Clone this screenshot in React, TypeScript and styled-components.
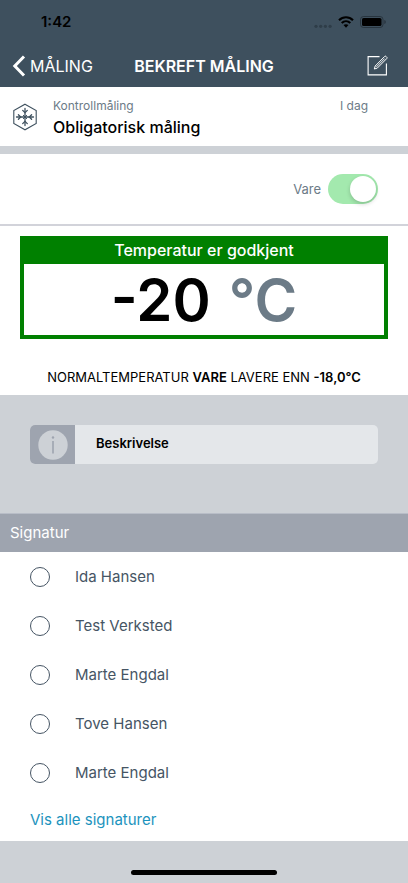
import React, { useState } from "react";
import styled, { createGlobalStyle } from "styled-components";

const colors = {
  header: "#3e505e",
  slate: "#465564",
  muted: "#6c7b87",
  page: "#cdd1d6",
  bar: "#9ea4af",
  field: "#e4e7ea",
  approved: "#008000",
  link: "#1c93bd",
};

const GlobalStyle = createGlobalStyle`
  *, *::before, *::after { box-sizing: border-box; }
  body {
    margin: 0;
    background: ${colors.page};
    font-family: Inter, "Liberation Sans", sans-serif;
    color: #000;
  }
  button { font: inherit; color: inherit; border: 0; padding: 0; background: none; cursor: pointer; }
  h1, h2, p, ul { margin: 0; padding: 0; }
`;

const Screen = styled.div`
  min-height: 100vh;
  display: flex;
  flex-direction: column;
`;

const Header = styled.header`
  background: ${colors.header};
`;

const StatusBar = styled.div`
  height: 44px;
  padding: 0 22px 0 41px;
  display: flex;
  align-items: center;
  justify-content: space-between;
`;

const Clock = styled.time`
  font-size: 15px;
  font-weight: 600;
  line-height: 20px;
`;

const StatusIcons = styled.div`
  display: flex;
  align-items: center;
  gap: 6px;
`;

const NavBar = styled.nav`
  height: 43px;
  padding: 0 12px;
  display: grid;
  grid-template-columns: 1fr auto 1fr;
  align-items: center;
  color: #fff;
`;

const BackButton = styled.button`
  justify-self: start;
  display: flex;
  align-items: center;
  gap: 4px;
  font-size: 16px;
  line-height: 20px;
`;

const NavTitle = styled.h1`
  font-size: 16px;
  font-weight: 600;
  line-height: 20px;
`;

const EditButton = styled.button`
  justify-self: end;
  display: flex;
  padding: 0 8px;
`;

const Task = styled.section`
  height: 59px;
  padding: 0 40px 0 12px;
  display: flex;
  align-items: center;
  gap: 15px;
  background: #fff;
`;

const TaskText = styled.div`
  flex: 1;
  padding-top: 2px;
`;

const TaskMeta = styled.div`
  display: flex;
  justify-content: space-between;
  font-size: 12px;
  line-height: 18px;
  color: ${colors.muted};
`;

const TaskTitle = styled.h2`
  font-size: 16px;
  font-weight: 500;
  line-height: 24px;
`;

const SwitchRow = styled.section`
  height: 80px;
  padding: 0 30px;
  display: flex;
  align-items: center;
  justify-content: flex-end;
  background: #fff;
  border-top: 8px solid ${colors.page};
  border-bottom: 2px solid #d2d3da;
`;

const SwitchLabel = styled.label`
  display: flex;
  align-items: center;
  gap: 7px;
  font-size: 13px;
  line-height: 20px;
  color: ${colors.muted};
`;

const Switch = styled.input`
  appearance: none;
  margin: 0;
  width: 50px;
  height: 30px;
  padding: 2px;
  display: flex;
  border-radius: 15px;
  background: #dcdfe2;
  cursor: pointer;

  &::before {
    content: "";
    width: 26px;
    height: 26px;
    border-radius: 50%;
    background: #fff;
    box-shadow: 0 2px 4px rgba(0, 0, 0, 0.18);
  }
  &:checked {
    justify-content: flex-end;
    background: #a3e9ae;
  }
`;

const Measurement = styled.section`
  padding: 10px 20px 8px;
  background: #fff;
`;

const ResultCard = styled.div`
  border: 4px solid ${colors.approved};
  border-top: 0;
`;

const ResultStatus = styled.p`
  background: ${colors.approved};
  color: #fff;
  text-align: center;
  font-size: 16px;
  font-weight: 500;
  line-height: 28px;
`;

const Reading = styled.p`
  padding-top: 2px;
  display: flex;
  justify-content: center;
  gap: 18px;
  font-size: 58px;
  font-weight: 600;
  line-height: 69px;
`;

const Unit = styled.span`
  color: ${colors.muted};
`;

const Norm = styled.p`
  padding-top: 28px;
  text-align: center;
  font-size: 13px;
  line-height: 20px;

  strong { font-weight: 600; }
`;

const DescriptionArea = styled.section`
  padding: 30px 30px 49px;
  border-bottom: 1px solid #b8bdc7;
`;

const DescriptionButton = styled.button`
  width: 100%;
  height: 39px;
  display: flex;
  overflow: hidden;
  border-radius: 5px;
  background: ${colors.field};
  text-align: left;
  font-size: 13px;
  font-weight: 600;
  line-height: 36px;
`;

const InfoBox = styled.span`
  width: 45px;
  height: 100%;
  margin-right: 21px;
  display: flex;
  align-items: center;
  justify-content: center;
  background: ${colors.bar};
`;

const SectionTitle = styled.h2`
  padding: 0 10px;
  background: ${colors.bar};
  color: #fff;
  font-size: 15px;
  font-weight: 400;
  line-height: 38px;
`;

const SignatureSection = styled.section`
  background: #fff;
`;

const SignatureList = styled.ul`
  list-style: none;
`;

const SignatureLabel = styled.label`
  height: 49px;
  padding: 0 30px;
  display: flex;
  align-items: center;
  gap: 25px;
  font-size: 15px;
  line-height: 20px;
  color: ${colors.slate};
  cursor: pointer;
`;

const Radio = styled.input`
  appearance: none;
  margin: 0;
  width: 20px;
  height: 20px;
  border: 1px solid ${colors.slate};
  border-radius: 50%;

  &:checked {
    background: ${colors.slate};
    box-shadow: inset 0 0 0 4px #fff;
  }
`;

const AllLink = styled.a`
  display: block;
  padding: 2px 30px 0;
  font-size: 15px;
  line-height: 42px;
  color: ${colors.link};
  text-decoration: none;
`;

const Footer = styled.footer`
  flex: 1;
  min-height: 42px;
  padding-bottom: 8px;
  display: flex;
  align-items: flex-end;
  justify-content: center;
`;

const HomeIndicator = styled.div`
  width: 36%;
  height: 5px;
  border-radius: 3px;
  background: #000;
`;

const SignalDots = () => (
  <svg width="18" height="12" viewBox="0 0 18 12" fill="#26333d" opacity="0.65" aria-hidden="true">
    {[2, 6.7, 11.4, 16.1].map((x) => (
      <circle key={x} cx={x} cy="10.3" r="1.6" />
    ))}
  </svg>
);

const WifiIcon = () => (
  <svg width="16" height="12" viewBox="0 0 16 12" aria-hidden="true">
    <g fill="none" stroke="#000" strokeWidth="2.1">
      <path d="M1 4.2C5 .2 11 .2 15 4.2" />
      <path d="M3.7 7.1c2.5-2.5 6.1-2.5 8.6 0" />
    </g>
    <path d="M5.5 9.1c1.5-1.3 3.5-1.3 5 0L8 11.7z" />
  </svg>
);

const BatteryIcon = () => (
  <svg width="26" height="12" viewBox="0 0 26 12" aria-hidden="true">
    <rect x=".5" y=".5" width="22.5" height="11" rx="3" fill="none" stroke="#1f2a32" strokeOpacity=".7" />
    <rect x="2" y="2" width="19.5" height="8" rx="1.6" />
    <path d="M24.3 4v4c1-.4 1.5-1.1 1.5-2s-.5-1.6-1.5-2z" fill="#1f2a32" opacity=".7" />
  </svg>
);

const BackIcon = () => (
  <svg width="14" height="22" viewBox="0 0 14 22" fill="none" stroke="#fff" strokeWidth="3" aria-hidden="true">
    <path d="M12 1.5 2.8 11 12 20.5" />
  </svg>
);

const EditIcon = () => (
  <svg width="21" height="21" viewBox="0 0 21 21" fill="none" stroke="#fff" aria-hidden="true">
    <path d="M12.500 1.600H1.100v18.300h18.300V8.500" strokeWidth="1.1" />
    <path d="m7.300 14 .9-3 9.500-9.600c.4-.4.900-.4 1.300 0l.8.8c.4.4.4.900 0 1.300l-9.500 9.600z" strokeWidth="1" />
    <path d="m9.400 11.900 8.200-8.300" strokeWidth=".9" />
  </svg>
);

const FreezeIcon = () => (
  <svg width="26" height="28" viewBox="0 0 26 28" fill="none" stroke={colors.header} aria-hidden="true">
    <path d="M13 1.200 24.200 7.600v12.800L13 26.800 1.800 20.400V7.600z" strokeWidth="1.100" />
    <g strokeWidth="1.300" strokeLinecap="round">
      <path d="M13 5.500v17M4.500 14h17" />
      <path d="m10.700 7.400 2.300 2.300 2.300-2.300M10.700 20.600l2.300-2.300 2.300 2.300" />
      <path d="m6.400 11.700 2.300 2.300-2.300 2.300M19.600 11.700 17.300 14l2.300 2.300" />
      <path d="m11.300 12.300 3.400 3.400M14.700 12.300l-3.400 3.400" strokeWidth="1" />
    </g>
  </svg>
);

const InfoIcon = () => (
  <svg width="30" height="30" viewBox="0 0 30 30" aria-hidden="true">
    <circle cx="15" cy="15" r="14.7" fill={colors.page} />
    <circle cx="15" cy="7.500" r="1.200" fill={colors.bar} />
    <path d="M15 11v12.500" stroke={colors.bar} strokeWidth="1.600" />
  </svg>
);

const signatures = ["Ida Hansen", "Test Verksted", "Marte Engdal", "Tove Hansen", "Marte Engdal"];

export default function App() {
  const [isItem, setIsItem] = useState(true);
  const [signature, setSignature] = useState<number | null>(null);

  return (
    <Screen>
      <GlobalStyle />
      <Header>
        <StatusBar>
          <Clock>1:42</Clock>
          <StatusIcons>
            <SignalDots />
            <WifiIcon />
            <BatteryIcon />
          </StatusIcons>
        </StatusBar>
        <NavBar>
          <BackButton type="button">
            <BackIcon />
            MÅLING
          </BackButton>
          <NavTitle>BEKREFT MÅLING</NavTitle>
          <EditButton type="button" aria-label="Rediger">
            <EditIcon />
          </EditButton>
        </NavBar>
      </Header>

      <Task>
        <FreezeIcon />
        <TaskText>
          <TaskMeta>
            <span>Kontrollmåling</span>
            <span>I dag</span>
          </TaskMeta>
          <TaskTitle>Obligatorisk måling</TaskTitle>
        </TaskText>
      </Task>

      <SwitchRow>
        <SwitchLabel>
          Vare
          <Switch
            type="checkbox"
            role="switch"
            checked={isItem}
            onChange={(event) => setIsItem(event.target.checked)}
          />
        </SwitchLabel>
      </SwitchRow>

      <Measurement>
        <ResultCard>
          <ResultStatus>Temperatur er godkjent</ResultStatus>
          <Reading>
            <span>-20</span>
            <Unit>°C</Unit>
          </Reading>
        </ResultCard>
        <Norm>
          NORMALTEMPERATUR <strong>VARE</strong> LAVERE ENN <strong>-18,0°C</strong>
        </Norm>
      </Measurement>

      <DescriptionArea>
        <DescriptionButton type="button">
          <InfoBox>
            <InfoIcon />
          </InfoBox>
          Beskrivelse
        </DescriptionButton>
      </DescriptionArea>

      <SignatureSection>
        <SectionTitle>Signatur</SectionTitle>
        <SignatureList>
          {signatures.map((name, index) => (
            <li key={index}>
              <SignatureLabel>
                <Radio
                  type="radio"
                  name="signature"
                  checked={signature === index}
                  onChange={() => setSignature(index)}
                />
                {name}
              </SignatureLabel>
            </li>
          ))}
        </SignatureList>
        <AllLink href="#signaturer">Vis alle signaturer</AllLink>
      </SignatureSection>

      <Footer>
        <HomeIndicator />
      </Footer>
    </Screen>
  );
}
